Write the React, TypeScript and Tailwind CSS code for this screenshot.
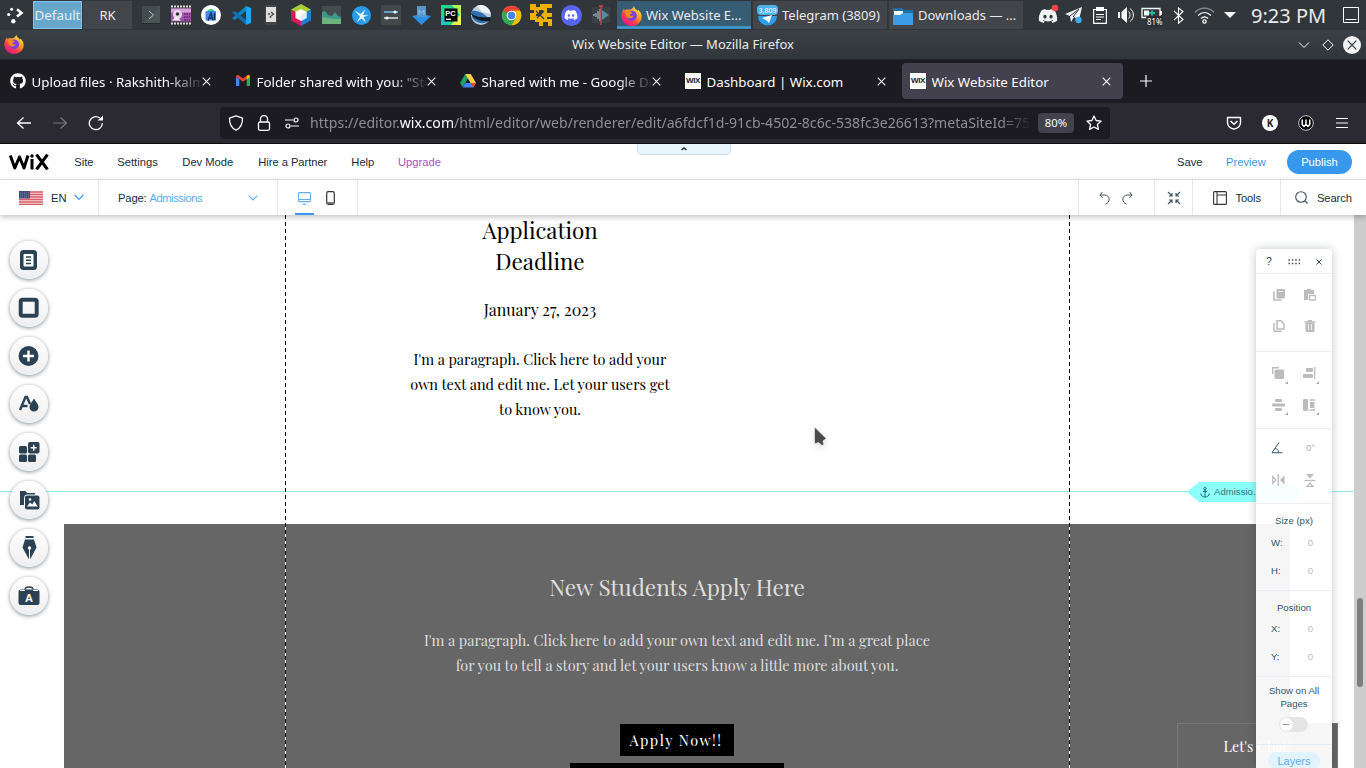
import type { ReactNode } from "react";
import { FaGithub, FaDiscord } from "react-icons/fa";

type IcProps = { w?: number; h?: number; vb?: string; className?: string; children: ReactNode };
function Ic({ w = 20, h, vb, className = "", children }: IcProps) {
  const hh = h ?? w;
  return (
    <svg width={w} height={hh} viewBox={vb ?? `0 0 ${w} ${hh}`} fill="none" className={`block shrink-0 ${className}`}>
      {children}
    </svg>
  );
}

function Firefox({ size = 21 }: { size?: number }) {
  return (
    <Ic w={size} vb="0 0 24 24">
      <defs>
        <linearGradient id="ffx" x1="20" y1="2" x2="5" y2="22" gradientUnits="userSpaceOnUse">
          <stop offset="0" stopColor="#fff04a" />
          <stop offset=".4" stopColor="#ff9726" />
          <stop offset=".7" stopColor="#ff3d47" />
          <stop offset="1" stopColor="#e5158f" />
        </linearGradient>
      </defs>
      <path d="M15 1c0 3 2 3.500 4 5.500.4.400.8 0 .6-1C22.500 8 24 11 23.500 14.500 23 20 18 24 12 24S.8 19.500.5 13.500C.3 10 1.500 6.500 3.500 4c.1 1 .3 1.700.8 2.200C6 4.500 8 4.700 9.500 5.500c2-.5 4-1.500 5.500-4.500z" fill="url(#ffx)" />
      <circle cx="12.300" cy="12.500" r="5.800" fill="#7542e5" />
      <path d="M4.500 7.500c2-1.500 4-1 5.500 0 1 .8 2.500.5 3 1-.5 1.500-2.500 1.500-2.800 2.500-.2 1.500 2.300 2 4.300 1-1 3-5 4-7.500 2-1.500-1.200-1.500-3-2.500-6.500z" fill="#ff8a1e" />
    </Ic>
  );
}

const launchers: ReactNode[] = [
  <Ic key="term" w={18}><rect width="18" height="18" fill="#4a5556" /><path d="M0 0h18L0 18z" fill="#434b4e" /><path d="M7 5l4.500 4L7 13" stroke="#b8c4c4" strokeWidth="1" /><path d="M0 17.500h18" stroke="#252b2d" /></Ic>,
  <Ic key="video" w={20}><rect width="20" height="20" fill="#333" /><path d="M0 1.500h20M0 18.500h20" stroke="#ddd" strokeWidth="2" strokeDasharray="2 1" /><rect y="3.500" width="20" height="13" fill="#a450ad" /><rect y="3.500" width="20" height="4" fill="#d9a2dc" /><circle cx="6.500" cy="9.500" r="4.500" fill="#e8d8ea" /><circle cx="6.500" cy="9" r="1.800" fill="#333" /><path d="M1 15.500l4-4 5 4z" fill="#fff" /><path d="M13 9h6M13 12h6M13 15h6" stroke="#612a69" strokeWidth="1.500" strokeDasharray="1.500 1" /></Ic>,
  <Ic key="studio" w={20}><circle cx="10" cy="10" r="10" fill="#fff" /><path d="M6 6.500C7 3 13 3 14 6.500z" fill="#39d185" /><rect x="4.500" y="6" width="10.500" height="9.500" rx="1" fill="#4285f4" /><path d="M7 15.500l3-7.500 2 7.500M8 13h3M13.500 8v7" stroke="#15365c" strokeWidth="1.400" /></Ic>,
  <Ic key="code" w={19}><path d="M14 0l5 2v15l-5 2z" fill="#25a4ef" /><path d="M14 5v9l-6-4.500z" fill="#31363b" /><path d="M14 0v5L3 14 0 12.500z" fill="#1080c9" /><path d="M0 6.500L3 5l11 9v5z" fill="#0d71b5" /></Ic>,
  <Ic key="phone" w={12} h={20}><rect width="12" height="20" rx="1" fill="#454545" /><rect x="1" y="2" width="10" height="15" fill="#dedede" /><circle cx="4" cy="9" r="1" fill="#444" /><circle cx="5.500" cy="12" r="1" fill="#444" /><path d="M6 7l2.500 2L6 11" stroke="#444" strokeWidth="1.300" /></Ic>,
  <Ic key="cube" w={20} h={22}><path d="M10 0l10 5.500-10 6L0 5.500z" fill="#a6ce39" /><path d="M0 5.500l10 6V22L0 16.500z" fill="#d71a5b" /><path d="M20 5.500l-10 6V22l10-5.500z" fill="#1b7fd6" /><path d="M10 5l5.500 3v6L10 17l-5.500-3V8z" fill="#fff" /><path d="M10 11l5.500-3v6L10 17z" fill="#dcebf7" /></Ic>,
  <Ic key="monitor" w={19} h={18}><rect width="19" height="18" fill="#454c4e" /><path d="M0 6l3-1 3 4 4 1 3-4 3 4 3 1v7H0z" fill="#3e9a86" /><path d="M0 11l6 1 5 1 8 0v5H0z" fill="#6bb57c" /></Ic>,
  <Ic key="krunner" w={19}><circle cx="9.500" cy="9.500" r="9.500" fill="#2a9bea" /><path d="M2.500 4.500l6 3.500 5-4.500-2.500 5.500 5.500.5-5 1.500 2.500 5.500-4.500-4-4.500 3.500 3-5.500z" fill="#e7f5ff" /></Ic>,
  <Ic key="settings" w={20}><rect width="20" height="20" rx="1" fill="#43484b" /><path d="M3 7h14" stroke="#6cc0e8" strokeWidth="1.500" /><path d="M3 13h14" stroke="#ddd" strokeWidth="1.500" /><circle cx="14" cy="7" r="1.600" fill="#fff" /><circle cx="6" cy="13" r="1.600" fill="#fff" /></Ic>,
  <Ic key="down" w={19}><path d="M5 9h9l5 1-9.500 9L0 10z" fill="#2e8fe6" /><path d="M5 0h9v11H5z" fill="#5796c4" /><path d="M7 9V4l2.500 3L12 4v5" stroke="#8fc3ec" /></Ic>,
  <Ic key="pycharm" w={20}><rect width="20" height="20" fill="#21d789" /><path d="M11 0h9v11z" fill="#b6ee56" /><path d="M20 9v11H10z" fill="#f0f04e" /><path d="M0 8v12h8z" fill="#1cc8c0" /><rect x="3.500" y="3.500" width="13" height="13" fill="#000" /><path d="M5 14.300h5" stroke="#fff" strokeWidth="1.300" /><text x="4.300" y="10.500" fill="#fff" fontSize="7.500" fontWeight="700" fontFamily="Liberation Sans, sans-serif">PC</text></Ic>,
  <Ic key="burp" w={22}><circle cx="11" cy="11" r="10" fill="#b9ccda" /><path d="M7 2c6-3 13 2 13.500 8L12 8z" fill="#edf5fa" /><path d="M2 7C8 6 15 10 20 16c-5 5-15 4-18-3z" fill="#2b6fae" /><path d="M0 8c4 5 12 6 21 5l-1 4C13 18 3 16 0 8z" fill="#111c26" /></Ic>,
  <Ic key="chrome" w={21} vb="0 0 48 48"><circle cx="24" cy="24" r="22.500" fill="#34a853" /><path d="M24 24L4.500 12.800A22.500 22.500 0 0 1 43.500 12.800z" fill="#ea4335" /><path d="M24 1.500A22.500 22.500 0 0 1 43.500 12.800H24z" fill="#ea4335" /><path d="M43.500 12.800A22.500 22.500 0 0 1 24 46.500l9.800-17L24 13z" fill="#fbbc05" /><circle cx="24" cy="24" r="11" fill="#fff" /><circle cx="24" cy="24" r="8.700" fill="#4285f4" /></Ic>,
  <Ic key="vm" w={22}><path d="M0 0h6v3h4V0h12v4h-5v5h-4V6H9v4H4V6H0z" fill="#edb106" /><path d="M0 9h6v3h5V9h11v4h-5v2h5v7h-4v-4h-5v4H9v-4H5v-2H0z" fill="#edb106" /><path d="M6 7l8 8M14 7l-7 7" stroke="#31363b" strokeWidth="1.300" /></Ic>,
  <span key="discord" className="flex size-[21px] items-center justify-center rounded-full bg-[#5865f2]"><FaDiscord size={14} color="#fff" /></span>,
  <Ic key="audio" w={18} h={20}><rect y="2" width="18" height="16" fill="#3b4146" /><path d="M1 10h2M4 8v4M6 6v8M8 4v12" stroke="#8fa2ab" strokeWidth="1.400" /><path d="M10 5l7 5-7 5z" fill="#5689a8" /><path d="M9 1v19M7 1h4" stroke="#d04646" strokeWidth="1.300" /></Ic>,
];

function Taskbar() {
  return (
    <div className="flex h-[30px] shrink-0 items-center bg-[#31363b] font-['Noto_Sans',sans-serif] text-[13px] text-[#e9eaeb]">
      <div className="flex w-[33px] justify-center pr-[3px]">
        <Ic w={17}><circle cx="1.700" cy="7.500" r="1.600" fill="#fff" /><circle cx="4.600" cy="2.200" r="1.500" fill="#fff" /><circle cx="6.300" cy="14.300" r="2.200" fill="#fff" /><path d="M10 2.200l4.500 3.700-4.500 3.700" stroke="#fff" strokeWidth="2.600" /></Ic>
      </div>
      <div className="flex h-7 w-[49px] items-center justify-center border border-[#7fc6ea] bg-[#67a7cc] pt-px text-[13.330px]">Default</div>
      <div className="ml-[1px] flex h-7 w-[49px] items-center justify-center bg-[#42454a] pt-px">RK</div>
      <div className="ml-1 flex">
        {launchers.map((icon, i) => (
          <div key={i} className="flex h-[30px] w-[30px] items-center justify-center">{icon}</div>
        ))}
      </div>
      <div className="ml-[1px] flex gap-[2px]">
        <div className="flex h-7 w-[134px] items-center gap-[4px] border-b-[3px] border-[#3d94c4] bg-[#375d75] pl-1 pt-[4px]"><Firefox /><span className="whitespace-nowrap">Wix Website E...</span></div>
        <div className="flex h-7 w-[134px] items-center gap-[4px] bg-[#42454a] pl-1 pt-px">
          <Ic w={21} h={22}><path d="M1 11a9.500 9.500 0 0 0 19 0z" fill="#2b9fe9" /><path d="M5 13l10-3-3 8-3-3z" fill="#fff" /><rect width="21" height="10" rx="4" fill="#4db1ec" /><text x="10.500" y="7.500" textAnchor="middle" fill="#fff" fontSize="7" fontFamily="Noto Sans, sans-serif">3,809</text></Ic>
          <span className="whitespace-nowrap">Telegram (3809)</span>
        </div>
        <div className="flex h-7 w-[134px] items-center gap-[5px] bg-[#42454a] pl-1 pt-px">
          <Ic w={20} h={18}><path d="M0 1h9l2 2h9v7H0z" fill="#1a71aa" /><path d="M1 4h18v7H1z" fill="#fff" /><path d="M10 4h10v4H10z" fill="#1a71aa" /><path d="M0 8h7l3-2h10v12H0z" fill="#3b9de8" /></Ic>
          <span className="whitespace-nowrap">Downloads — ...</span>
        </div>
      </div>
      <div className="ml-3 flex">
        <Tray><Ic w={22}><FaDiscord x="1" y="2" size={20} color="#f2f3f4" /><circle cx="18" cy="4" r="3.300" fill="#f04545" /></Ic></Tray>
        <Tray><Ic w={18}><path d="M0 8L17 1l-3 13-5-3-3 5-1-6z" fill="#f2f3f4" /><path d="M5 10l9-7-6 8" stroke="#31363b" /><circle cx="13.500" cy="14" r="3.200" fill="#3daee9" /></Ic></Tray>
        <Tray><Ic w={14} h={17}><path d="M.6 2.500h12.800v13.900H.6z" stroke="#fcfcfc" strokeWidth="1.200" /><path d="M3 0h8v4H3z" fill="#fcfcfc" /><path d="M3 7.500h8M3 10h8M3 12.500h5" stroke="#fcfcfc" /></Ic></Tray>
        <Tray><Ic w={17} h={18}><path d="M0 6h2v6H0zM3.500 6L9 1v16l-5.500-5z" fill="#fcfcfc" /><path d="M10.500 5.500c2 2 2 5 0 7M12 2.500c4.500 3 4.500 10 0 13" stroke="#fcfcfc" /></Ic></Tray>
        <Tray><Ic w={22} h={22} className="mt-[3px]"><path d="M1 2.500h18v9H1z" stroke="#fcfcfc" strokeWidth="1.300" /><path d="M3 4.500h5v5H3z" fill="#fcfcfc" /><path d="M19 5h2v4h-2z" fill="#fcfcfc" /><path d="M8 7h6M11 4.500v5" stroke="#1abc9c" strokeWidth="2" /><rect x="5" y="10" width="17" height="11" rx="2" fill="#282d31" /><text x="6" y="18.500" fill="#fff" fontSize="8.500" textLength="15.500" lengthAdjust="spacingAndGlyphs" fontFamily="Noto Sans, sans-serif">81%</text></Ic></Tray>
        <Tray><Ic w={11} h={17}><path d="M1 4l9 8.500-4.500 3.700V1L10 4.500 1 13" stroke="#fcfcfc" strokeWidth="1.100" /></Ic></Tray>
        <Tray><Ic w={21} h={17}><path d="M1 5.500C6-.3 15-.3 20 5.500" stroke="#8e9295" strokeWidth="1.200" /><path d="M4 8.500c4-4 9-4 13 0M7 11.500c2-2.300 5-2.300 7 0" stroke="#fcfcfc" strokeWidth="1.200" /><circle cx="10.500" cy="14.500" r="1.700" stroke="#fcfcfc" strokeWidth="1.200" /></Ic></Tray>
        <Tray><Ic w={12} h={6}><path d="M0 0h12L6 6z" fill="#fcfcfc" /></Ic></Tray>
      </div>
      <span className="ml-2 w-[77px] whitespace-nowrap pt-px text-[20px] leading-none">9:23 PM</span>
      <Ic w={16} className="ml-[15px]"><path d="M.5.5h15v15H.5zM2.500 12.500h11" stroke="#fcfcfc" /></Ic>
    </div>
  );
}

function Tray({ children }: { children: ReactNode }) {
  return <div className="flex h-[30px] w-[26px] shrink-0 items-center justify-center">{children}</div>;
}

function TitleBar() {
  return (
    <div className="flex h-[30px] shrink-0 items-center border-b border-[#202327] bg-gradient-to-b from-[#3b4047] to-[#31363b] font-['Noto_Sans',sans-serif] text-[#e9eaeb]">
      <div className="flex w-[100px] pb-0.5 pl-1"><Firefox size={20} /></div>
      <span className="flex-1 text-center text-[13px]">Wix Website Editor — Mozilla Firefox</span>
      <div className="flex w-[100px] items-center justify-end gap-3 pr-[5px]">
        <Ic w={12} h={8}><path d="M1 1.500l5 5 5-5" stroke="#fcfcfc" /></Ic>
        <Ic w={12}><path d="M6 .8L11.200 6 6 11.200.8 6z" stroke="#fcfcfc" /></Ic>
        <Ic w={18} className="-ml-[3px]"><circle cx="9" cy="9" r="9" fill="#f1f2f3" /><path d="M4.700 4.700l8.600 8.600M13.300 4.700l-8.600 8.600" stroke="#31363b" strokeWidth="1.200" /></Ic>
      </div>
    </div>
  );
}

const wixFav = <span className="flex size-4 items-center justify-center overflow-hidden bg-white font-['Liberation_Sans',sans-serif] text-[8px] font-bold leading-none tracking-[-0.4px] text-[#222]">WIX</span>;

const tabs: { title: string; icon: ReactNode; fade?: boolean; active?: boolean }[] = [
  { title: "Upload files · Rakshith-kalm", icon: <FaGithub size={16} color="#fff" />, fade: true },
  { title: "Folder shared with you: \"Stu", icon: <Ic w={16}><path d="M1 3.500V13h3.300V6z" fill="#4285f4" /><path d="M11.700 6v7H15V3.500z" fill="#34a853" /><path d="M1 3.500l7 5.200 7-5.200c0-1.800-1.500-2-2.500-1.200L8 5.600 3.500 2.300C2.500 1.500 1 1.800 1 3.500z" fill="#ea4335" /><path d="M11.700 3v3.500L15 4c0-2-2-2.300-3.300-1z" fill="#fbbc04" /></Ic>, fade: true },
  { title: "Shared with me - Google Dr", icon: <Ic w={16}><path d="M5.300 1h5.400L5.300 10l-2.700 4L0 10z" fill="#1ea362" /><path d="M5.300 1h5.400L16 10h-5.400z" fill="#ffcf48" /><path d="M2.700 14.500L5.300 10H16l-2.700 4.500z" fill="#4285f4" /><path d="M10.600 10H16l-2.700 4.500z" fill="#ea4335" /></Ic>, fade: true },
  { title: "Dashboard | Wix.com", icon: wixFav },
  { title: "Wix Website Editor", icon: wixFav, active: true },
];

function Tabs() {
  return (
    <div className="flex h-[43px] shrink-0 items-center gap-1 bg-[#1c1b22] pb-[1px] pl-[2px] font-['Noto_Sans',sans-serif] text-[13.330px] text-[#fbfbfe]">
      {tabs.map((t) => (
        <div key={t.title} className={`flex h-9 w-[221px] items-center rounded pl-2 ${t.active ? "bg-[#42414d]" : ""}`}>
          <span className="flex size-4 shrink-0">{t.icon}</span>
          <span className={`ml-[5.500px] mt-[3px] w-[169px] overflow-hidden whitespace-nowrap ${t.fade ? "[mask-image:linear-gradient(to_right,#000_135px,transparent_172px)]" : ""}`}>{t.title}</span>
          <Ic w={9} className="ml-[1.500px]"><path d="M.7.7l7.600 7.600M8.300.7L.7 8.300" stroke="#fbfbfe" strokeWidth="1.100" /></Ic>
        </div>
      ))}
      <Ic w={12} className="ml-[13px]"><path d="M6 0v12M0 6h12" stroke="#fbfbfe" strokeWidth="1.200" /></Ic>
    </div>
  );
}

function NavBar() {
  return (
    <div className="flex h-[41px] shrink-0 items-center border-b border-[#0c0c0d] bg-[#2b2a33] font-['Noto_Sans',sans-serif]">
      <div className="flex w-[220px] items-center pl-4">
        <Ic w={16}><path d="M15 8H1.500M7.500 2.500L1.500 8l6 5.500" stroke="#fbfbfe" strokeWidth="1.300" /></Ic>
        <Ic w={16} className="ml-5"><path d="M1 8h13.500M8.500 2.500l6 5.500-6 5.500" stroke="#77767e" strokeWidth="1.200" /></Ic>
        <Ic w={16} className="ml-5"><path d="M14.300 8a6.500 6.500 0 1 1-2.500-5" stroke="#fbfbfe" strokeWidth="1.300" /><path d="M9.500 5.500H15V.500z" fill="#fbfbfe" /></Ic>
      </div>
      <div className="flex h-8 w-[890px] items-center rounded bg-[#1c1b22] pl-2">
        <Ic w={16}><path d="M8 .8l6.500 2.400c.2 5.500-1.500 9.500-6.500 12-5-2.500-6.700-6.500-6.500-12z" stroke="#fbfbfe" strokeWidth="1.300" strokeLinejoin="round" /></Ic>
        <Ic w={16} className="ml-3"><rect x="2.500" y="7" width="11" height="8.300" rx="1.500" stroke="#fbfbfe" strokeWidth="1.300" /><path d="M4.500 7V4a3.500 3.500 0 0 1 7 0v3" stroke="#fbfbfe" strokeWidth="1.300" /></Ic>
        <Ic w={16} className="ml-3"><path d="M1 5h8M7 11h8" stroke="#fbfbfe" strokeWidth="1.200" /><circle cx="12" cy="5" r="2" stroke="#fbfbfe" strokeWidth="1.200" /><circle cx="4" cy="11" r="2" stroke="#fbfbfe" strokeWidth="1.200" /></Ic>
        <span className="mb-px ml-[10px] w-[721px] overflow-hidden whitespace-nowrap text-[14.080px] text-[#8f8e95] [mask-image:linear-gradient(to_right,#000_690px,transparent_722px)]">https://editor.<span className="text-[#fbfbfe]">wix.com</span>/html/editor/web/renderer/edit/a6fdcf1d-91cb-4502-8c6c-538fc3e26613?metaSiteId=754</span>
        <span className="ml-[7px] flex h-5 w-9 shrink-0 items-center justify-center rounded-sm bg-[#42414d] pt-px text-[11.300px] text-[#fbfbfe]">80%</span>
        <Ic w={16} className="ml-3"><path d="M8 1l2.100 4.500 5 .6-3.700 3.400 1 4.900L8 12l-4.400 2.400 1-4.900L.9 6.100l5-.6z" stroke="#fbfbfe" strokeWidth="1.300" strokeLinejoin="round" /></Ic>
      </div>
      <div className="ml-[116px] flex items-center gap-5">
        <Ic w={16}><path d="M1.500 2.500h13v5a6.500 6.500 0 0 1-13 0z" stroke="#fbfbfe" strokeWidth="1.400" strokeLinejoin="round" /><path d="M4.500 6l3.500 3.300L11.500 6" stroke="#fbfbfe" strokeWidth="1.500" /></Ic>
        <span className="flex size-4 items-center justify-center rounded-full bg-white text-[10px] font-bold leading-none text-[#222]">K</span>
        <Ic w={16}><circle cx="8" cy="8" r="7.300" fill="#050505" stroke="#ddd" strokeWidth=".9" /><path d="M4.200 4.500v5l1.800 2 2-2.200 2 2.200 1.800-2v-5M8 4.500v5" stroke="#fff" strokeWidth="1.500" /></Ic>
        <Ic w={12} className="ml-[2px]"><path d="M0 1.500h12M0 6h12M0 10.500h12" stroke="#fbfbfe" strokeWidth="1.200" /></Ic>
      </div>
    </div>
  );
}

function WixHeader() {
  return (
    <div className="relative flex h-9 shrink-0 items-center border-b border-[#e5e9ec] bg-white pt-[2px] text-[#162d3d]">
      <Ic w={40} h={16} className="mb-[2px] ml-[9px]">
        <path d="M1.300 1.500l4.500 12.500L10.500 3l4.500 11L19 1.500" stroke="#000" strokeWidth="3" strokeLinejoin="round" />
        <path d="M23 5v10.500" stroke="#000" strokeWidth="3" /><circle cx="23" cy="2" r="1.700" fill="#000" />
        <path d="M27.500.500L38.500 15.500M38.500.500L27.500 15.500" stroke="#000" strokeWidth="3" />
      </Ic>
      <span className="ml-[25.300px] w-[43px]">Site</span>
      <span className="w-[65px]">Settings</span>
      <span className="w-[76px]">Dev Mode</span>
      <span className="w-[93px] whitespace-nowrap tracking-[-0.050px]">Hire a Partner</span>
      <span className="w-[46.700px]">Help</span>
      <span className="text-[#aa4dc8]">Upgrade</span>
      <span className="ml-auto w-[49px]">Save</span>
      <span className="w-[61px] text-[#3899ec]">Preview</span>
      <span className="mb-[2px] mr-[14px] flex h-6 w-[65px] items-center justify-center rounded-full bg-[#3899ec] pt-px text-white">Publish</span>
      <div className="absolute left-[637px] top-0 flex h-[11px] w-[94px] justify-center rounded-b-[5px] border border-t-0 border-[#cddce6] bg-[#eaf7ff] pt-[3px]">
        <Ic w={6} h={4}><path d="M.5 3L3 1l2.500 2" stroke="#162d3d" strokeWidth="1.500" /></Ic>
      </div>
    </div>
  );
}

function WixToolbar() {
  return (
    <div className="relative z-20 flex h-[35px] shrink-0 items-stretch bg-white text-[#162d3d] shadow-[0_2px_6px_rgba(0,0,0,0.25)]">
      <div className="flex w-[99px] items-center border-r border-[#e5e9ec] pl-[19px]">
        <Ic w={24} h={14}><rect width="24" height="14" fill="#f4dede" /><path d="M0 1h24M0 3.500h24M0 6h24M0 8.500h24M0 11h24M0 13.300h24" stroke="#dc5b68" strokeWidth="1.300" /><rect width="11" height="7.500" fill="#3b4a7c" /><path d="M1 2h9M1 4h9M1 6h9" stroke="#9ba4c3" strokeWidth=".7" strokeDasharray="1 1" /></Ic>
        <span className="ml-2 pt-[2px]">EN</span>
        <Ic w={10} h={7} className="ml-[7px]"><path d="M.7 1l4.300 4.500L9.300 1" stroke="#3899ec" strokeWidth="1.200" /></Ic>
      </div>
      <div className="flex w-[179px] items-center border-r border-[#e5e9ec] pl-[19px]">
        <span className="pt-[2px] tracking-[-0.150px]">Page: <span className="tracking-[-0.450px] text-[#60acef]">Admissions</span></span>
        <Ic w={10} h={6} className="ml-auto mr-[19px] mt-px"><path d="M.7.700L5 5 9.300.7" stroke="#60acef" strokeWidth="1.100" /></Ic>
      </div>
      <div className="flex w-20 border-r border-[#e5e9ec] pl-[17px]">
        <div className="flex w-[19px] items-center justify-center border-b-2 border-[#3899ec] pt-[3px]">
          <Ic w={13}><rect x=".6" y=".6" width="11.800" height="9" rx="1" stroke="#60acef" strokeWidth="1.100" /><path d="M1 7.500h11M4.500 12.300h4" stroke="#60acef" strokeWidth="1.100" /></Ic>
        </div>
        <div className="ml-[12px] flex items-center pt-px"><Ic w={9} h={14}><rect x=".7" y=".7" width="7.600" height="12.600" rx="1.500" stroke="#333" strokeWidth="1.200" /><path d="M1 11h7v2H1z" fill="#777" /></Ic></div>
      </div>
      <div className="ml-auto flex w-[76px] items-center border-l border-[#e5e9ec] pl-[20px] pt-px">
        <Ic w={11} h={14}><path d="M3.500 1L.8 4l3 3M1 4h4.500c6 0 6 8 1 9" stroke="#3b5260" strokeWidth="1" /></Ic>
        <Ic w={11} h={14} className="ml-[12px]"><path d="M7.500 1l2.700 3-3 3M10 4H5.500c-6 0-6 8-1 9" stroke="#3b5260" strokeWidth="1" /></Ic>
      </div>
      <div className="flex w-[38px] items-center justify-center border-l border-[#e5e9ec]"><Ic w={14}><path d="M1 1l4 4M5 2v3H2M13 1L9 5M9 2v3h3M1 13l4-4M5 12V9H2M13 13L9 9M9 12V9h3" stroke="#3b5260" strokeWidth="1.100" /></Ic></div>
      <div className="flex w-[88px] items-center border-l border-[#e5e9ec] pl-[19.500px]"><Ic w={14}><rect x=".6" y=".6" width="12.800" height="12.800" rx="1" stroke="#333" strokeWidth="1.100" /><path d="M4 1v12M4 4h10" stroke="#333" strokeWidth="1.100" /></Ic><span className="ml-[9px] pt-[2px] tracking-[-0.150px]">Tools</span></div>
      <div className="flex w-[86px] items-center border-l border-[#e5e9ec] pl-[14px]"><Ic w={13}><circle cx="6" cy="6" r="5.300" stroke="#3b5260" strokeWidth="1.100" /><path d="M10 10l2.500 2.500" stroke="#3b5260" strokeWidth="1.100" /></Ic><span className="ml-[9px] pt-[2px] tracking-[-0.100px]">Search</span></div>
    </div>
  );
}

const D = "#2b4254";
const sideIcons: ReactNode[] = [
  <Ic key="0" w={22}><rect x="2" y="1" width="17" height="20" rx="3.500" fill={D} /><rect x="5.500" y="5" width="10" height="12.500" rx=".7" fill="#fff" /><path d="M8 8h5M8 11.300h5M8 14.600h5" stroke={D} strokeWidth="1.500" /></Ic>,
  <Ic key="1" w={22}><rect x="2.700" y="2.700" width="16" height="16" rx="2" stroke={D} strokeWidth="4" /></Ic>,
  <Ic key="2" w={22}><circle cx="10.500" cy="11" r="10" fill={D} /><path d="M10.500 5.500v11M5 11h11" stroke="#fff" strokeWidth="2.400" /></Ic>,
  <Ic key="3" w={22}><path d="M2 17L7.500 4H9l3 7M4.500 13h5" stroke={D} strokeWidth="2.400" /><path d="M16 5.500c2 3.500 4.500 5.500 4.500 8.500a4.500 4.500 0 0 1-9 0c0-3 2.500-5 4.500-8.500z" fill={D} /></Ic>,
  <Ic key="4" w={22}><rect x="1" y="5" width="8" height="7.500" rx="1.500" fill={D} /><rect x="1" y="13.500" width="8" height="7.500" rx="1.500" fill={D} /><rect x="10" y="13.500" width="8" height="7.500" rx="1.500" fill={D} /><rect x="10" y="1" width="11.500" height="11.500" rx="2" fill={D} /><path d="M15.700 3.700v6M12.700 6.700h6" stroke="#fff" strokeWidth="1.500" /></Ic>,
  <Ic key="5" w={22}><path d="M2 2h5.500l1.500 2h8v3H7v9H2z" fill={D} /><rect x="6.500" y="6" width="15.500" height="15" rx="2.500" fill={D} stroke="#fff" /><path d="M9 17.500l3-4 2.200 2 2-3.500 3.500 5.500z" fill="#fff" /><circle cx="12" cy="10.500" r="1.300" fill="#fff" /></Ic>,
  <Ic key="6" w={22} h={26}><path d="M7.500 1h8v2h-8zM7 4.500h9l2.500 8L12 24.500h-1L4.500 12.500z" fill={D} /><circle cx="11.500" cy="13" r="1.700" fill="#fff" /><path d="M11.500 14v11" stroke="#fff" /></Ic>,
  <Ic key="7" w={22}><path d="M7 4.500c0-3.500 8-3.500 8 0" stroke={D} strokeWidth="1.500" /><rect x=".5" y="4.500" width="21" height="15.500" rx="2.500" fill={D} /><path d="M2 5.500h5M15 5.500h5" stroke="#fff" /><text x="11" y="16.500" textAnchor="middle" fill="#fff" fontSize="11" fontWeight="700" fontFamily="Liberation Sans, sans-serif">A</text></Ic>,
];

const G = "#bcbcbc";

function Cell({ children }: { children: ReactNode }) {
  return <span className="flex w-[31px] justify-center">{children}</span>;
}

function NumRow({ label }: { label: string }) {
  return <div className="flex h-7 items-center justify-between pl-[15px] pr-[19px] text-[#2f566f]"><span>{label}</span><span className="text-[#b9bdc0]">0</span></div>;
}

function Panel() {
  return (
    <div className="absolute left-[1256px] top-[34px] h-[519px] w-[76px] overflow-hidden rounded-t-[5px] bg-white/94 font-['Liberation_Sans',sans-serif] text-[9.600px] text-[#2f566f] shadow-[0_0_10px_rgba(22,45,61,0.28)]">
      <div className="flex h-[25px] items-center border-b border-[#eceff2] bg-white pl-[10px] pt-px">
        <span className="w-[22px] text-[10.500px] text-[#2b4254]">?</span>
        <Ic w={12} h={6}><path d="M.5 1h12M.5 4.500h12" stroke={D} strokeWidth="1.300" strokeDasharray="1.400 2" /></Ic>
        <Ic w={6} className="ml-[16px]"><path d="M.5.5l5 5M5.500.5l-5 5" stroke={D} /></Ic>
      </div>
      <div className="flex h-[78px] flex-wrap content-start border-b border-[#eceff2] pl-[7px] pt-[15px] [row-gap:19px]">
        <Cell><Ic w={12}><rect x="3.500" y="0" width="8.500" height="9.500" rx="1" fill={G} /><path d="M1 2.500V11h7.500" stroke={G} strokeWidth="1.600" /><path d="M5.500 2.500h4.500" stroke="#eee" /></Ic></Cell>
        <Cell><Ic w={12}><path d="M0 1h3V0h4v1h3v4H4v6H0z" fill={G} /><rect x="5.500" y="6.500" width="6" height="4.500" stroke={G} strokeWidth="1.400" /></Ic></Cell>
        <Cell><Ic w={12}><path d="M4 .8h4L11 4v5H4z" stroke={G} strokeWidth="1.500" /><path d="M1 3v8.300h7.500" stroke={G} strokeWidth="1.600" /></Ic></Cell>
        <Cell><Ic w={12}><path d="M.5 2h11M4 .8h4" stroke={G} strokeWidth="1.500" /><path d="M1.500 3h9v8a1 1 0 0 1-1 1h-7a1 1 0 0 1-1-1z" fill={G} /><path d="M4.500 4v6M7.500 4v6" stroke="#fff" strokeWidth=".8" /></Ic></Cell>
      </div>
      <div className="flex h-[77px] flex-wrap content-start border-b border-[#eceff2] pl-[6px] pt-[14px] [row-gap:14px]">
        <Cell><Ic w={18} vb="-3 -1 18 18" className="overflow-visible"><path d="M.7 7V.7H7" stroke={G} strokeWidth="1.400" /><rect x="2.500" y="2.500" width="9.500" height="9.500" rx="1.500" fill={G} /><path d="M13 17h3v-3z" fill="#aaa" /></Ic></Cell>
        <Cell><Ic w={18} vb="-3 -1 18 18" className="overflow-visible"><rect x="3" y="1" width="7" height="4" rx="1" fill={G} /><rect x="0" y="7" width="10" height="4" rx="1" fill={G} /><path d="M11.700 0v12" stroke={G} strokeWidth="1.300" /><path d="M13 17h3v-3z" fill="#aaa" /></Ic></Cell>
        <Cell><Ic w={18} vb="-3 -1 18 18" className="overflow-visible"><rect x="3" y="0" width="7" height="3" rx="1" fill={G} /><rect x="0" y="4.500" width="13" height="3" rx="1" fill={G} /><rect x="3" y="9" width="7" height="3" rx="1" fill={G} /><path d="M13 16h3v-3z" fill="#aaa" /></Ic></Cell>
        <Cell><Ic w={18} vb="-3 -1 18 18" className="overflow-visible"><rect x="0" y="0" width="5" height="12" rx="1" fill={G} /><rect x="7" y="3" width="4.500" height="6" fill={G} /><path d="M6.500 1h5.500M6.500 11h5.500" stroke={G} strokeWidth="1.300" /><path d="M13 16h3v-3z" fill="#aaa" /></Ic></Cell>
      </div>
      <div className="flex h-[75px] flex-wrap content-start border-b border-[#eceff2] pl-[7px] pt-[13px] [row-gap:20px]">
        <Cell><Ic w={12} className="-ml-1"><path d="M8 .5L1 10.700h10.500M3.500 7c3-1 4 1.500 4 3.500" stroke="#2f566f" /></Ic></Cell>
        <span className="pl-[12px] leading-3 text-[#b0b4b7]">0°</span>
        <Cell><Ic w={13} h={12}><path d="M.7 2.500v7L4 6z" stroke={G} strokeWidth="1.200" /><path d="M12.500 1.500v9L8 6z" fill={G} /><path d="M6.300 0v12" stroke={G} strokeWidth="1.300" /></Ic></Cell>
        <Cell><Ic w={12} h={13}><path d="M2 0h8L6 4.500z" fill={G} /><path d="M3 12.300h6L6 9z" stroke={G} strokeWidth="1.200" /><path d="M.5 6.500h11" stroke={G} strokeWidth="1.300" /></Ic></Cell>
      </div>
      <div className="h-[87px] border-b border-[#e8eef3] pt-[10px]"><div className="mb-[1px] text-center leading-[14px]">Size (px)</div><NumRow label="W:" /><NumRow label="H:" /></div>
      <div className="h-[86px] border-b border-[#e8eef3] pt-[10px]"><div className="text-center leading-[14px]">Position</div><NumRow label="X:" /><NumRow label="Y:" /></div>
      <div className="flex h-[68px] flex-col items-center border-b border-[#e0edf5] pt-[7px] text-center leading-[13px]">
        <span className="whitespace-nowrap">Show on All<br />Pages</span>
        <div className="mr-[2px] mt-[7px] flex h-[15px] w-[29px] items-center rounded-full bg-[#e5e5e5] pl-[1px]"><span className="flex size-[13px] items-center justify-center rounded-full bg-white"><span className="h-px w-[6px] bg-[#999]" /></span></div>
      </div>
      <div className="mx-auto mt-[7px] flex h-[18px] w-[52px] items-center justify-center rounded-full bg-[#e0f3ff] pt-px text-[11px] text-[#60acef]">Layers</div>
    </div>
  );
}

function Canvas() {
  return (
    <div className="relative flex-1 overflow-hidden bg-white font-['Playfair_Display','Liberation_Serif',serif]">
      <div className="flex h-[309px] flex-col items-center pr-[286px] text-center text-black">
        <h2 className="w-[240px] text-[22.400px] leading-[31px]">Application<br />Deadline</h2>
        <p className="mt-[23px] whitespace-nowrap text-[16px] leading-5">January 27, 2023</p>
        <p className="mt-[27px] whitespace-nowrap text-[14.500px] leading-[25px]">I'm a paragraph. Click here to add your<br />own text and edit me. Let your users get<br />to know you.</p>
      </div>
      <section className="ml-16 flex h-[244px] w-[1226px] flex-col items-center bg-[#666] text-center text-[#dedede]">
        <h2 className="mt-[47px] whitespace-nowrap text-[22.550px] leading-8">New Students Apply Here</h2>
        <p className="mt-[25px] whitespace-nowrap text-[14.500px] leading-[25px]">I'm a paragraph. Click here to add your own text and edit me. I’m a great place<br />for you to tell a story and let your users know a little more about you.</p>
        <div className="mt-[46px] flex h-8 w-[114px] shrink-0 items-center justify-center whitespace-nowrap bg-black pr-[2px] pt-px text-[14.400px] tracking-[1.500px] text-white">Apply Now!!</div>
        <div className="mt-[7px] h-[6px] w-[214px] bg-black" />
      </section>
      <div className="absolute left-0 top-[276px] h-px w-[1354px] bg-[#93eeee]" />
      <div className="absolute left-[285px] top-0 h-[553px] w-px bg-[repeating-linear-gradient(to_bottom,#000_0_4px,#fff_4px_7px)]" />
      <div className="absolute left-[1069px] top-0 h-[553px] w-px bg-[repeating-linear-gradient(to_bottom,#000_0_4px,#fff_4px_7px)]" />
      <div className="absolute left-[1187px] top-[267px] flex h-5 w-[113px] items-center rounded-r-full bg-[#8cfffa] pl-[13px] font-['Liberation_Sans',sans-serif] text-[9.600px] text-[#287b80] [clip-path:polygon(0_50%,12px_0,100%_0,100%_100%,12px_100%)]">
        <Ic w={10} h={11}><circle cx="5" cy="1.700" r="1.200" stroke="#176d76" /><path d="M5 3v7M3 4.500h4M.7 6.500C1 9 3 10 5 10s4-1 4.300-3.500" stroke="#176d76" /></Ic>
        <span className="ml-1">Admissio...</span>
      </div>
      <div className="absolute left-[1177px] top-[508px] flex h-[45px] w-[161px] justify-center border border-b-0 border-[#777] bg-[#666] pt-[11px] text-[14.400px] leading-[22px] text-white">Let's Chat!</div>
      <nav className="absolute left-[10px] top-[26px] flex flex-col gap-[10px]">
        {sideIcons.map((icon, i) => (
          <div key={i} className="flex size-[38px] items-center justify-center rounded-full bg-gradient-to-b from-white to-[#eee] shadow-[0_1px_4px_rgba(22,45,61,0.55)]">{icon}</div>
        ))}
      </nav>
      <Panel />
      <div className="absolute right-0 top-0 h-full w-3 bg-[#cdcdcd] pl-[3px] pt-[383px]"><div className="h-[89px] w-[6px] rounded-full bg-[#7b7f7f]" /></div>
      <svg className="absolute left-[813px] top-[211px] drop-shadow-md" width="16" height="22" viewBox="0 0 16 22"><path d="M1.500 1v17l4-1.500L9 19.500l2-1-1-3.500 3.300-2.500z" fill="#4a4a4a" stroke="#eee" strokeWidth=".7" /></svg>
    </div>
  );
}

export default function App() {
  return (
    <div className="flex h-[768px] w-[1366px] flex-col overflow-hidden font-['Liberation_Sans',sans-serif] text-[11.200px]">
      <Taskbar />
      <TitleBar />
      <Tabs />
      <NavBar />
      <WixHeader />
      <WixToolbar />
      <Canvas />
    </div>
  );
}
